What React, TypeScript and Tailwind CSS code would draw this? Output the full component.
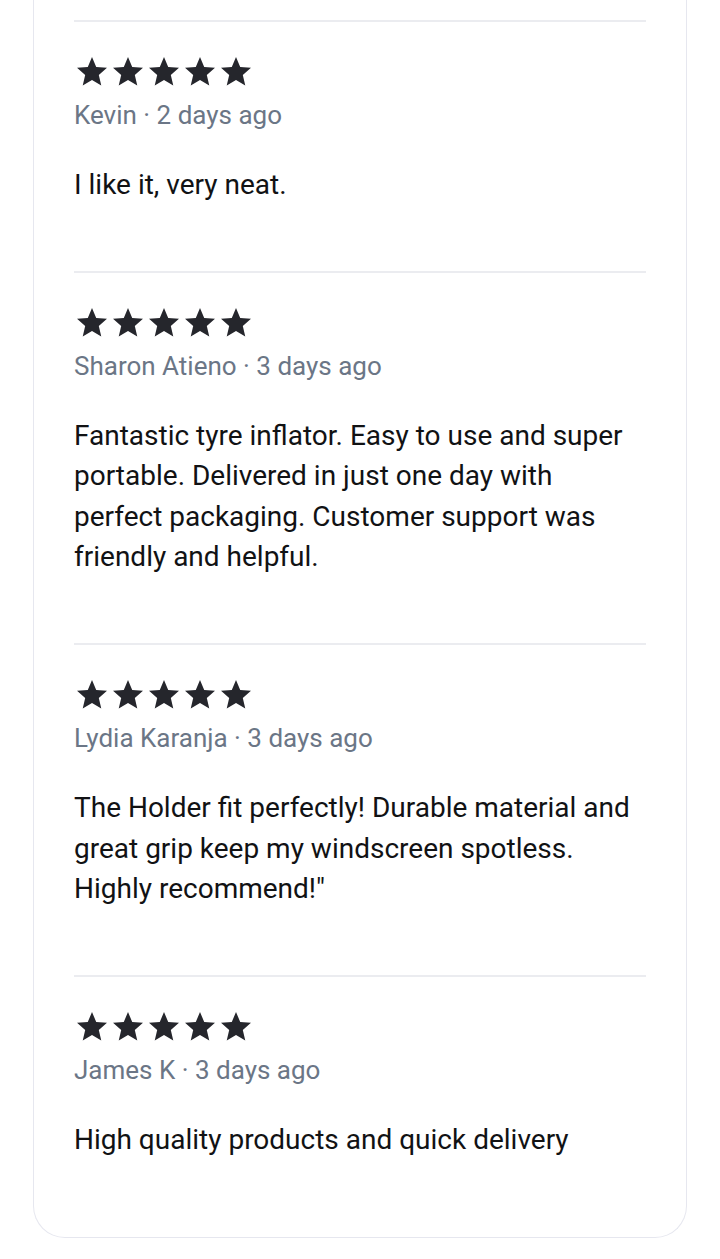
const reviews = [
  { name: 'Kevin', when: '2 days ago', text: 'I like it, very neat.' },
  {
    name: 'Sharon Atieno',
    when: '3 days ago',
    text: 'Fantastic tyre inflator. Easy to use and super portable. Delivered in just one day with perfect packaging. Customer support was friendly and helpful.',
  },
  {
    name: 'Lydia Karanja',
    when: '3 days ago',
    text: 'The Holder fit perfectly! Durable material and great grip keep my windscreen spotless. Highly recommend!"',
  },
  { name: 'James K', when: '3 days ago', text: 'High quality products and quick delivery' },
];

const Star = () => (
  <svg width="36" height="36" viewBox="0 0 24 24" className="fill-[#25262c]">
    <path d="M12 17.27L18.18 21l-1.64-7.03L22 9.24l-7.19-.61L12 2 9.19 8.63 2 9.24l5.46 4.73L5.82 21z" />
  </svg>
);

const App = () => {
  return (
    <div className="min-h-screen bg-white font-['Roboto',sans-serif]">
      <div className="mx-[33px] rounded-b-[32px] border border-t-0 border-[#e6e7ef] px-10 pt-5 pb-3">
        {reviews.map((r) => (
          <div key={r.name} className="border-t-2 border-[#ebecf0] pt-8 pb-[65px]">
            <div className="flex">
              {[0, 1, 2, 3, 4].map((i) => (
                <Star key={i} />
              ))}
            </div>
            <p className="mt-[9px] text-[26px] leading-8 text-[#6b7686]">
              {r.name} · {r.when}
            </p>
            <p className="mt-[34px] text-[28px] leading-[40.6px] text-[#111214]">{r.text}</p>
          </div>
        ))}
      </div>
    </div>
  );
};

export default App;
